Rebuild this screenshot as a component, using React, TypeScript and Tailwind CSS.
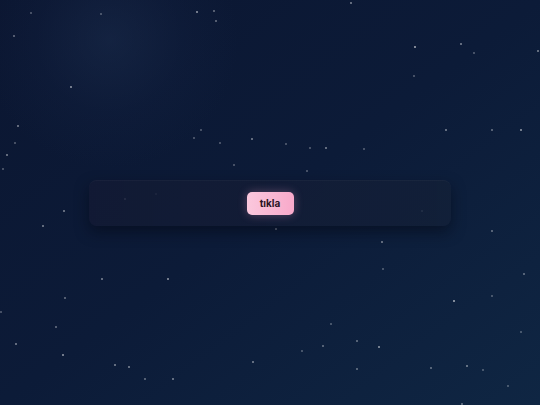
const STARS: [number, number, number][] = [
  [196, 11, 0.7], [213, 10, 0.5], [215, 20, 0.5], [13, 35, 0.5], [70, 86, 0.7], [17, 125, 0.6],
  [6, 154, 0.6], [30, 12, 0.4], [350, 2, 0.6], [414, 46, 0.8], [460, 43, 0.6], [473, 52, 0.4],
  [537, 50, 0.6], [413, 75, 0.4], [445, 129, 0.6], [520, 129, 0.7], [491, 129, 0.5], [200, 129, 0.4],
  [193, 137, 0.4], [219, 142, 0.4], [251, 138, 0.6], [285, 143, 0.4], [309, 147, 0.4], [325, 147, 0.6],
  [363, 148, 0.4], [233, 164, 0.4], [306, 170, 0.4], [124, 198, 0.7], [155, 193, 0.4], [421, 210, 0.5],
  [275, 228, 0.5], [381, 241, 0.6], [491, 230, 0.5], [382, 268, 0.4], [491, 295, 0.4], [453, 300, 0.8],
  [167, 278, 0.7], [101, 278, 0.6], [64, 297, 0.5], [55, 326, 0.5], [15, 343, 0.6], [62, 354, 0.7],
  [114, 364, 0.6], [128, 366, 0.6], [144, 378, 0.5], [172, 378, 0.6], [322, 345, 0.5], [378, 346, 0.7],
  [330, 323, 0.4], [356, 340, 0.5], [252, 361, 0.6], [301, 350, 0.4], [356, 368, 0.5], [430, 367, 0.5],
  [466, 365, 0.6], [482, 369, 0.4], [507, 385, 0.4], [461, 403, 0.5], [520, 331, 0.4], [523, 273, 0.5],
  [14, 142, 0.4], [2, 168, 0.4], [63, 210, 0.6], [42, 225, 0.6], [0, 311, 0.4], [100, 13, 0.4],
];

export default function App() {
  return (
    <div className="relative w-[540px] h-[405px] overflow-hidden bg-gradient-to-br from-[#0b1631] via-[#0c1b38] to-[#0f2643] font-['Inter','Liberation_Sans',sans-serif]">
      {/* soft glow top-left */}
      <div className="absolute left-[-20px] top-[-90px] w-[260px] h-[260px] rounded-full bg-[radial-gradient(circle,rgba(35,55,90,0.35)_0%,rgba(22,38,72,0.2)_40%,transparent_70%)]" />
      {STARS.map(([x, y, o], i) => (
        <span
          key={i}
          className="absolute w-[1.5px] h-[1.5px] rounded-full bg-white"
          style={{ left: x, top: y, opacity: o * 0.8 }}
        />
      ))}
      <div className="relative flex h-full items-center justify-center">
        <div className="flex w-[362px] h-[46px] mt-[1px] items-center justify-center rounded-[8px] border-t border-white/[0.03] bg-gradient-to-r from-[#131a34]/85 to-[#132038]/80 shadow-[0_6px_14px_rgba(3,8,20,0.5)]">
          <button className="w-[47px] h-[23px] rounded-[5px] bg-gradient-to-r from-[#fbc8dd] to-[#f8a9ca] text-[10px] font-bold text-[#2a1424] shadow-[0_0_10px_rgba(255,170,210,0.3)]">
            tıkla
          </button>
        </div>
      </div>
    </div>
  );
}
